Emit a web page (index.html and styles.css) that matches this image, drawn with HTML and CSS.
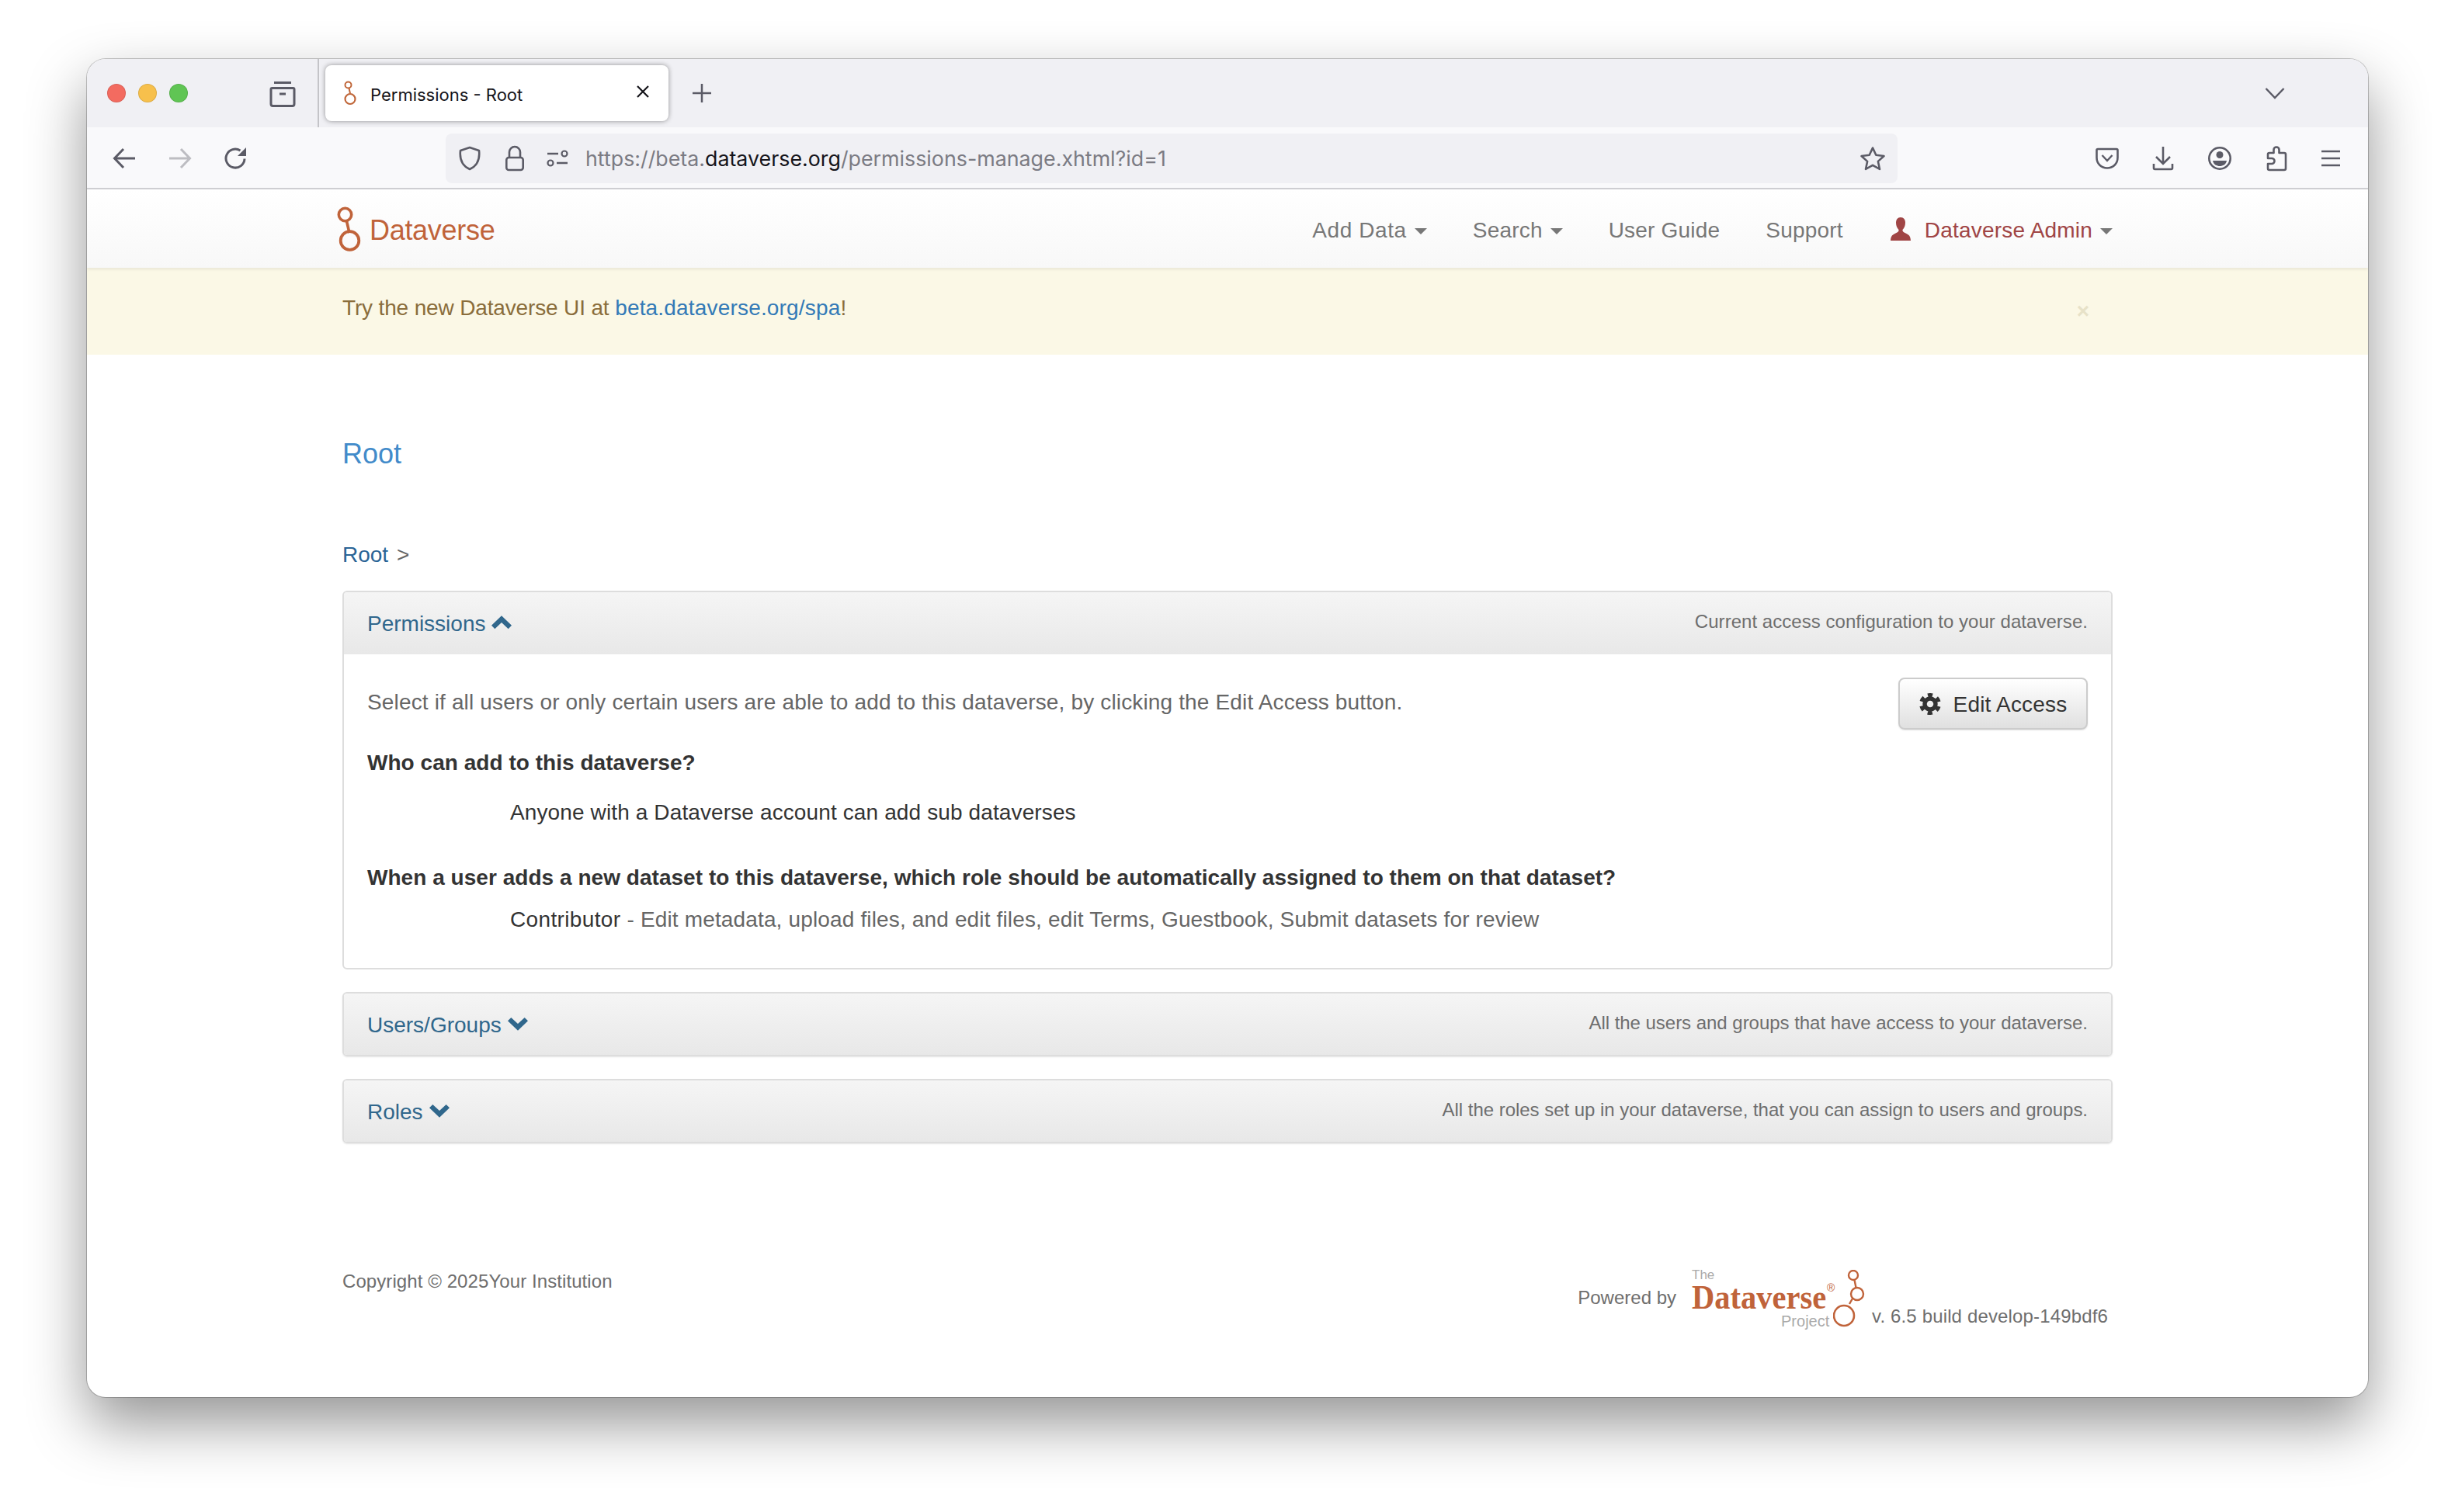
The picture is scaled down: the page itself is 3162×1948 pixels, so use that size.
FILE: index.html
```html
<!DOCTYPE html>
<html lang="en">
<head>
<meta charset="utf-8">
<title>Permissions - Root</title>
<link rel="stylesheet" href="styles.css">
</head>
<body>
<div class="window">
  <div class="tabbar">
    <div class="lights"><span class="light red"></span><span class="light yellow"></span><span class="light green"></span></div>
    <svg class="fxview" width="34" height="34" viewBox="0 0 34 34"><path d="M6 2.500h22M3.500 9.500h27a1.500 1.500 0 0 1 1.500 1.500v19a2.500 2.500 0 0 1-2.500 2.500h-25a2.500 2.500 0 0 1-2.500-2.500V11a1.500 1.500 0 0 1 1.500-1.500z" fill="none" stroke="#5b5b66" stroke-width="3"/><path d="M13 17h8" stroke="#5b5b66" stroke-width="3"/></svg>
    <div class="tabsep"></div>
    <div class="tab">
      <svg class="tabicon" width="18" height="32" viewBox="0 0 18 32"><circle cx="6.500" cy="5.500" r="4" fill="none" stroke="#c0673a" stroke-width="2"/><path d="M7.500 9.500l1.500 7" stroke="#c0673a" stroke-width="2"/><circle cx="9" cy="23.500" r="6.500" fill="none" stroke="#c0673a" stroke-width="2.200"/></svg>
      <span class="tabtitle">Permissions - Root</span>
      <svg class="tabclose" width="18" height="18" viewBox="0 0 18 18"><path d="M2 2l14 14M16 2L2 16" stroke="#15141a" stroke-width="2.200"/></svg>
    </div>
    <svg class="plus" width="26" height="26" viewBox="0 0 26 26"><path d="M13 1v24M1 13h24" stroke="#5b5b66" stroke-width="2.500"/></svg>
    <svg class="tabs-chevron" width="26" height="16" viewBox="0 0 26 16"><path d="M1.500 2l11.500 12L24.500 2" fill="none" stroke="#5b5b66" stroke-width="2.500"/></svg>
  </div>

  <div class="toolbar">
    <svg class="navbtn back" width="30" height="28" viewBox="0 0 30 28"><path d="M29 14H3M14 2L2.500 14 14 26" fill="none" stroke="#5b5b66" stroke-width="3"/></svg>
    <svg class="navbtn fwd" width="30" height="28" viewBox="0 0 30 28"><path d="M1 14h26M16 2l11.500 12L16 26" fill="none" stroke="#bdbdc2" stroke-width="3"/></svg>
    <svg class="navbtn reload" width="30" height="30" viewBox="0 0 30 30"><path d="M26 15.500A12 12 0 1 1 20.500 5" fill="none" stroke="#5b5b66" stroke-width="3"/><path d="M28 1v11H17z" fill="#5b5b66"/></svg>
    <div class="urlbar">
      <svg class="shield" width="30" height="32" viewBox="0 0 30 32"><path d="M15 2l12 4c1 9-1 19-12 24C4 25 2 15 3 6z" fill="none" stroke="#5b5b66" stroke-width="2.600" stroke-linejoin="round"/></svg>
      <svg class="lock" width="26" height="34" viewBox="0 0 26 34"><path d="M6 16V9a7 7 0 0 1 14 0v7" fill="none" stroke="#5b5b66" stroke-width="2.600"/><rect x="2.300" y="16" width="21.400" height="16" rx="3" fill="none" stroke="#5b5b66" stroke-width="2.600"/></svg>
      <svg class="perm" width="30" height="22" viewBox="0 0 30 22"><path d="M2 5h14M14 17h14" stroke="#5b5b66" stroke-width="2.600"/><circle cx="24" cy="5" r="3.500" fill="none" stroke="#5b5b66" stroke-width="2.200"/><circle cx="6" cy="17" r="3.500" fill="none" stroke="#5b5b66" stroke-width="2.200"/></svg>
      <span class="url"><span class="dim">https://beta.</span>dataverse.org<span class="dim">/permissions-manage.xhtml?id=1</span></span>
      <svg class="star" width="34" height="32" viewBox="0 0 34 32"><path d="M17 2.500l4.300 9.300 10.200 1.200-7.600 6.900 2.100 10-9-5-9 5 2.100-10-7.600-6.900 10.200-1.200z" fill="none" stroke="#5b5b66" stroke-width="2.600" stroke-linejoin="round"/></svg>
    </div>
    <div class="tools">
      <svg width="30" height="28" viewBox="0 0 30 28"><path d="M3 2h24a1.500 1.500 0 0 1 1.500 1.500V13c0 8-6 13.500-13.500 13.500S1.500 21 1.500 13V3.500A1.500 1.500 0 0 1 3 2z" fill="none" stroke="#5b5b66" stroke-width="2.600"/><path d="M8.500 10l6.500 7 6.500-7" fill="none" stroke="#5b5b66" stroke-width="2.400"/></svg>
      <svg width="28" height="32" viewBox="0 0 28 32"><path d="M14 1v22M5 14l9 9 9-9" fill="none" stroke="#5b5b66" stroke-width="2.600"/><path d="M2 23v5.500a1.500 1.500 0 0 0 1.500 1.500h21a1.500 1.500 0 0 0 1.500-1.500V23" fill="none" stroke="#5b5b66" stroke-width="2.600"/></svg>
      <svg width="32" height="32" viewBox="0 0 32 32"><circle cx="16" cy="16" r="13.700" fill="none" stroke="#5b5b66" stroke-width="2.600"/><circle cx="16" cy="11.500" r="4.500" fill="#5b5b66"/><path d="M7 19h18c-1 5-5 7-9 7s-8-2-9-7z" fill="#5b5b66"/></svg>
      <svg width="28" height="34" viewBox="0 0 28 34"><path d="M14 2.500a3.500 3.500 0 0 1 3.500 3.500v4H24a2 2 0 0 1 2 2v18a2 2 0 0 1-2 2H5a2 2 0 0 1-2-2v-6h5a3.500 3.500 0 0 0 0-7H3v-5a2 2 0 0 1 2-2h5.500V6A3.500 3.500 0 0 1 14 2.500z" fill="none" stroke="#5b5b66" stroke-width="2.600" stroke-linejoin="round"/></svg>
      <svg width="26" height="22" viewBox="0 0 26 22"><path d="M1 2h24M1 11h24M1 20h24" stroke="#5b5b66" stroke-width="2.600"/></svg>
    </div>
  </div>

  <div class="viewport">
    <nav class="navbar">
      <a class="brand">
        <svg width="32" height="58" viewBox="0 0 32 58"><circle cx="10.500" cy="10.500" r="8.200" fill="none" stroke="#c0633a" stroke-width="3.600"/><path d="M12.500 19l3.500 15" stroke="#c0633a" stroke-width="3.600"/><circle cx="16.500" cy="44" r="11.800" fill="none" stroke="#c0633a" stroke-width="3.800"/></svg>
        <span class="brandname">Dataverse</span>
      </a>
      <ul class="navlinks">
        <li class="adddata">Add Data<i class="caret"></i></li>
        <li>Search<i class="caret"></i></li>
        <li>User Guide</li>
        <li>Support</li>
        <li class="account">
          <svg width="30" height="30" viewBox="0 0 30 30"><path d="M15 0c4 0 6 3 6 7 0 4-1.500 7-3.500 9-.5 2 1 3 4 4.500 4 2 6 3 6.500 9.500H2c.5-6.500 2.500-7.500 6.500-9.500 3-1.500 4.500-2.500 4-4.500C10.500 14 9 11 9 7c0-4 2-7 6-7z" fill="#a04545"/></svg>
          <span class="admin">Dataverse Admin</span><i class="caret"></i>
        </li>
      </ul>
    </nav>

    <div class="banner">
      <span class="bannertext">Try the new Dataverse UI at <a class="bannerlink">beta.dataverse.org/spa</a>!</span>
      <span class="bannerclose">×</span>
    </div>

    <main class="container">
      <h1 class="title">Root</h1>
      <div class="crumbs"><a>Root</a> &gt;</div>

      <section class="panel">
        <header class="panelhead">
          <a class="paneltitle">Permissions
            <svg class="chev" width="26" height="18" viewBox="0 0 24 16"><path d="M12 0l12 11.500-4 4L12 8l-8 7.500-4-4z" fill="#30678c"/></svg>
          </a>
          <span class="panelnote">Current access configuration to your dataverse.</span>
        </header>
        <div class="panelbody">
          <div class="intro">
            <p>Select if all users or only certain users are able to add to this dataverse, by clicking the Edit Access button.</p>
            <button class="editbtn">
              <svg width="28" height="28" viewBox="0 0 28 28"><circle cx="14" cy="14" r="7" fill="none" stroke="#333" stroke-width="5.500"/><circle cx="14" cy="14" r="11.500" fill="none" stroke="#333" stroke-width="5" stroke-dasharray="6.040 6" transform="rotate(-105 14 14)"/></svg>
              <span class="btnlabel">Edit Access</span>
            </button>
          </div>
          <h2 class="q q1">Who can add to this dataverse?</h2>
          <p class="answer a1">Anyone with a Dataverse account can add sub dataverses</p>
          <h2 class="q q2">When a user adds a new dataset to this dataverse, which role should be automatically assigned to them on that dataset?</h2>
          <p class="answer a2">Contributor <span class="desc">- Edit metadata, upload files, and edit files, edit Terms, Guestbook, Submit datasets for review</span></p>
        </div>
      </section>

      <section class="panel closed">
        <header class="panelhead">
          <a class="paneltitle">Users/Groups
            <svg class="chev" width="26" height="18" viewBox="0 0 24 16"><path d="M12 16L0 4.500l4-4L12 8l8-7.500 4 4z" fill="#30678c"/></svg>
          </a>
          <span class="panelnote">All the users and groups that have access to your dataverse.</span>
        </header>
      </section>

      <section class="panel closed">
        <header class="panelhead">
          <a class="paneltitle">Roles
            <svg class="chev" width="26" height="18" viewBox="0 0 24 16"><path d="M12 16L0 4.500l4-4L12 8l8-7.500 4 4z" fill="#30678c"/></svg>
          </a>
          <span class="panelnote">All the roles set up in your dataverse, that you can assign to users and groups.</span>
        </header>
      </section>

      <footer class="footer">
        <div class="copyright">Copyright © 2025Your Institution</div>
        <div class="powered">
          <span class="pby">Powered by</span>
          <span class="dvlogo">
            <span class="dvthe">The</span>
            <span class="dvname">Dataverse</span>
            <span class="dvreg">®</span>
            <span class="dvproject">Project</span>
            <svg class="dvrings" width="44" height="76" viewBox="0 0 44 76"><circle cx="26" cy="7" r="6" fill="none" stroke="#c0633a" stroke-width="2.400"/><path d="M27.500 13l2 10" stroke="#c0633a" stroke-width="2.400"/><circle cx="31" cy="31" r="8" fill="none" stroke="#c0633a" stroke-width="2.400"/><path d="M25 37l-4 7" stroke="#c0633a" stroke-width="2.400"/><circle cx="14" cy="59" r="13" fill="none" stroke="#c0633a" stroke-width="2.600"/></svg>
          </span>
          <span class="version">v. 6.5 build develop-149bdf6</span>
        </div>
      </footer>
    </main>
  </div>
</div>
</body>
</html>
```

FILE: styles.css
```css
* { box-sizing: border-box; }
html, body { margin: 0; padding: 0; background: #fff; }
body {
  height: 1948px;
  overflow: hidden;
  padding: 76px 112px 0;
  font-family: "Liberation Sans", Arial, sans-serif;
  font-size: 28px;
  color: #333;
}
a { text-decoration: none; }
p, h1, h2, ul { margin: 0; padding: 0; }

.window {
  width: 2938px;
  height: 1724px;
  border-radius: 24px;
  background: #fff;
  overflow: hidden;
  display: flex;
  flex-direction: column;
  box-shadow: 0 0 0 1px rgba(0,0,0,.22), 0 34px 76px rgba(0,0,0,.42);
}

/* tab strip */
.tabbar {
  height: 88px;
  flex: none;
  background: #f0f0f4;
  display: flex;
  align-items: center;
  padding-left: 26px;
}
.lights { display: flex; gap: 16px; }
.light { width: 24px; height: 24px; border-radius: 50%; border: 1px solid rgba(0,0,0,.1); }
.red { background: #f36b60; }
.yellow { background: #f7c04c; }
.green { background: #60c554; }
.fxview { margin-left: 105px; margin-top: 2px; }
.tabsep { width: 2px; height: 88px; background: #c4c4c8; margin-left: 28px; }
.tab {
  width: 442px;
  height: 72px;
  margin-left: 8px;
  background: #fff;
  border-radius: 8px;
  box-shadow: 0 0 6px rgba(0,0,0,.4);
  display: flex;
  align-items: center;
  padding-left: 23px;
}
.tabicon { flex: none; }
.tabtitle {
  margin-left: 17px;
  padding-top: 3px;
  font: 22px Inter, "Liberation Sans", sans-serif;
  color: #15141a;
  width: 342px;
  white-space: nowrap;
}
.tabclose { flex: none; margin-top: -4px; }
.plus { margin-left: 30px; flex: none; }
.tabs-chevron { margin-left: auto; margin-right: 107px; flex: none; }

/* toolbar */
.toolbar {
  height: 80px;
  flex: none;
  background: #f9f9fb;
  border-bottom: 2px solid #cfcfd3;
  display: flex;
  align-items: center;
  padding: 2px 0 0 33px;
}
.navbtn { flex: none; }
.fwd { margin-left: 42px; }
.reload { margin-left: 42px; }
.urlbar {
  margin-left: 255px;
  width: 1870px;
  height: 64px;
  background: #f0f0f4;
  border-radius: 8px;
  display: flex;
  align-items: center;
  padding-left: 16px;
}
.lock { margin-left: 30px; }
.perm { margin-left: 27px; }
.url {
  margin-left: 21px;
  font: 26.800px Inter, "Liberation Sans", sans-serif;
  color: #15141a;
  white-space: nowrap;
}
.dim { color: #7b7b83; }
.star { margin-left: auto; margin-right: 15px; }
.tools { display: flex; align-items: center; gap: 43px; margin-left: 255px; }

/* page */
.viewport { flex: 1; display: flex; flex-direction: column; min-height: 0; }
.navbar {
  height: 101px;
  flex: none;
  background: linear-gradient(#fff, #f8f8f8);
  box-shadow: 0 2px 4px rgba(0,0,0,.08);
  position: relative;
  z-index: 1;
  display: flex;
  align-items: center;
  justify-content: space-between;
  padding: 0 329px 0 322px;
}
.brand { display: flex; align-items: center; gap: 10px; color: #c0633a; font-size: 36px; letter-spacing: -.3px; }
.brandname { margin-top: 4px; }
.navlinks { list-style: none; display: flex; align-items: center; gap: 59px; color: #777; margin-top: 4px; letter-spacing: .2px; }
.navlinks li { display: flex; align-items: center; white-space: nowrap; }
.navlinks .adddata { letter-spacing: .6px; }
.caret {
  width: 0; height: 0;
  margin-left: 10px;
  margin-top: 3px;
  border-top: 8px solid #777;
  border-left: 8px solid transparent;
  border-right: 8px solid transparent;
}
.account svg { margin-right: 16px; margin-top: -4px; }
.admin { color: #a04545; }

.banner {
  height: 112px;
  flex: none;
  background: #fbf8e6;
  color: #8a6d3b;
  display: flex;
  justify-content: space-between;
  padding: 36px 329px 0;
}
.bannertext { letter-spacing: -.15px; }
.bannerlink { color: #337ab7; letter-spacing: .18px; }
.bannerclose { color: #e7e2c8; font-size: 28px; font-weight: bold; margin-right: 30px; margin-top: 4px; }

.container { padding: 0 329px; flex: 1; display: flex; flex-direction: column; }
.title { font-size: 36px; font-weight: 400; color: #428bca; margin-top: 106px; line-height: 44px; }
.crumbs { margin-top: 88px; line-height: 40px; color: #666; word-spacing: 3px; }
.crumbs a { color: #2a6496; }

.panel {
  margin-top: 29px;
  border: 2px solid #ddd;
  border-radius: 6px;
  overflow: hidden;
}
.crumbs + .panel { margin-top: 26px; }
.panelhead {
  height: 80px;
  background: linear-gradient(#f5f5f5, #e8e8e8);
  display: flex;
  align-items: center;
  justify-content: space-between;
  padding: 0 30px;
}
.paneltitle { color: #30678c; display: flex; align-items: center; gap: 8px; margin-top: 2px; }
.chev { margin-top: -4px; }
.panelnote { font-size: 24px; color: #6e6e6e; margin-top: -4px; letter-spacing: .04px; }
.closed .panelhead { height: 79px; }
.closed .panelnote { letter-spacing: -.03px; }
.closed { box-shadow: 0 1px 2px rgba(0,0,0,.1); }

.panelbody { padding: 30px 30px 0; height: 404px; color: #333; }
.intro { display: flex; justify-content: space-between; align-items: flex-start; }
.intro p { color: #666; line-height: 32px; margin-top: 16px; letter-spacing: .15px; }
.editbtn {
  width: 244px;
  height: 67px;
  font: 28px "Liberation Sans", Arial, sans-serif;
  color: #333;
  border: 2px solid #ccc;
  border-radius: 8px;
  background: linear-gradient(#fff, #e0e0e0);
  box-shadow: 0 1px 2px rgba(0,0,0,.1);
  display: flex;
  align-items: center;
  justify-content: center;
  gap: 16px;
  padding: 0;
}
.btnlabel { letter-spacing: .2px; padding-top: 2px; }
.q { font-size: 28px; line-height: 34px; font-weight: 700; color: #333; letter-spacing: .035px; }
.q1 { margin-top: 26px; }
.q2 { margin-top: 50px; }
.answer { padding-left: 184px; line-height: 34px; color: #333; letter-spacing: .12px; }
.a1 { margin-top: 30px; }
.a2 { margin-top: 20px; letter-spacing: .35px; }
.desc { color: #666; letter-spacing: .15px; }

.footer { display: flex; justify-content: space-between; align-items: flex-start; margin-top: 164px; font-size: 24px; color: #6e6e6e; }
.copyright { letter-spacing: .08px; }
.powered { display: flex; align-items: flex-start; margin-right: 6px; margin-top: -1px; }
.pby { margin-top: 22px; }
.dvlogo { position: relative; display: block; width: 226px; height: 76px; margin-left: 20px; }
.dvthe { position: absolute; left: 0; top: 0; font-size: 17px; line-height: 14px; color: #aaa; }
.dvname {
  position: absolute; left: 0; top: 10px;
  font: 700 45px/50px "Liberation Serif", serif;
  color: #c0633a;
  transform: scaleX(.9);
  transform-origin: left;
  white-space: nowrap;
}
.dvreg { position: absolute; left: 174px; top: 16px; font-size: 14px; line-height: 14px; color: #c0633a; }
.dvproject { position: absolute; left: 115px; top: 55px; font-size: 20px; line-height: 22px; color: #aaa; }
.dvrings { position: absolute; left: 182px; top: 0; }
.version { margin-left: 6px; margin-top: 46px; letter-spacing: .15px; }
```
